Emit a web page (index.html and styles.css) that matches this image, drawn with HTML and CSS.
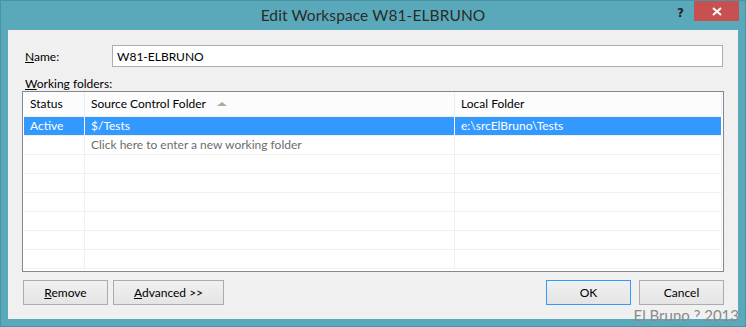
FILE: index.html
```html
<!DOCTYPE html>
<html lang="en">
<head>
    <meta charset="UTF-8">
    <title>Edit Workspace W81-ELBRUNO</title>
    <link rel="stylesheet" href="styles.css">
</head>
<body>

    <!-- Dialog window -->
    <div class="window">
        <div class="title-bar">
            <div></div>
            <div class="title">Edit Workspace W81-ELBRUNO</div>
            <div class="controls">
                <span class="help">?</span>
                <span class="close">
                    <svg width="10" height="9" viewBox="0 0 10 9"><path d="M1 1 L9 8 M9 1 L1 8" stroke="#fff" stroke-width="2"/></svg>
                </span>
            </div>
        </div>

        <div class="client">
            <div class="name-row">
                <label class="label"><u>N</u>ame:</label>
                <div class="textbox">W81-ELBRUNO</div>
            </div>
            <div class="label folders-label"><u>W</u>orking folders:</div>

            <!-- Working folders grid -->
            <div class="grid">
                <div class="grid-row header">
                    <div class="cell">Status</div>
                    <div class="cell">Source Control Folder <span class="sort-arrow"></span></div>
                    <div class="cell">Local Folder</div>
                </div>
                <div class="grid-row selected">
                    <div class="cell">Active</div>
                    <div class="cell">$/Tests</div>
                    <div class="cell">e:\srcElBruno\Tests</div>
                </div>
                <div class="grid-row">
                    <div class="cell"></div>
                    <div class="cell hint">Click here to enter a new working folder</div>
                    <div class="cell"></div>
                </div>
                <div class="grid-row"><div class="cell"></div><div class="cell"></div><div class="cell"></div></div>
                <div class="grid-row"><div class="cell"></div><div class="cell"></div><div class="cell"></div></div>
                <div class="grid-row"><div class="cell"></div><div class="cell"></div><div class="cell"></div></div>
                <div class="grid-row"><div class="cell"></div><div class="cell"></div><div class="cell"></div></div>
                <div class="grid-row"><div class="cell"></div><div class="cell"></div><div class="cell"></div></div>
                <div class="grid-row"><div class="cell"></div><div class="cell"></div><div class="cell"></div></div>
            </div>

            <div class="button-row">
                <button class="btn"><u>R</u>emove</button>
                <button class="btn btn-advanced"><u>A</u>dvanced &gt;&gt;</button>
                <div class="spacer"></div>
                <button class="btn btn-ok">OK</button>
                <button class="btn">Cancel</button>
            </div>
        </div>

        <div class="watermark">El Bruno ? 2013</div>
    </div>

</body>
</html>
```

FILE: styles.css
```css
body {
    margin: 0;
    padding: 0;
    font-family: 'Lato', 'Noto Sans', sans-serif;
    font-size: 12px;
    color: #000;
}

/* Window frame */
.window {
    position: relative;
    width: 746px;
    height: 327px;
    box-sizing: border-box;
    background-color: #5aa9bb;
    border: 1px solid #4a93a4;
    display: flex;
    flex-direction: column;
}

.title-bar {
    height: 29px;
    display: grid;
    grid-template-columns: 1fr auto 1fr;
    align-items: start;
}

    .title-bar .title {
        font-size: 15.5px;
        color: #2b2b2b;
        padding-top: 5px;
        letter-spacing: 0.1px;
    }

    .title-bar .controls {
        display: flex;
        justify-content: flex-end;
        align-items: flex-start;
        padding-right: 6px;
    }

    .title-bar .help {
        font-family: 'DejaVu Sans', sans-serif;
        font-weight: bold;
        font-size: 12px;
        color: #222;
        margin-top: 5px;
        margin-right: 10px;
    }

    .title-bar .close {
        width: 45px;
        height: 20px;
        background-color: #c75050;
        display: flex;
        align-items: center;
        justify-content: center;
    }

/* Client area */
.client {
    margin: 0 7px;
    height: 289px;
    background-color: #f0f0f0;
    box-sizing: border-box;
    padding: 15px 14px 0 14px;
    display: flex;
    flex-direction: column;
}

.label {
    color: #000;
}

.name-row {
    display: flex;
    align-items: center;
}

    .name-row .label {
        width: 87px;
        padding-left: 3px;
    }

.textbox {
    flex: 1;
    height: 22px;
    box-sizing: border-box;
    border: 1px solid #abadb3;
    background-color: #fff;
    padding: 3px 4px 0 4px;
    margin-right: 1px;
}

.folders-label {
    padding-left: 3px;
    margin-top: 9px;
    height: 15px;
}

/* Grid */
.grid {
    height: 181px;
    box-sizing: border-box;
    border: 1px solid #828790;
    background-color: #fff;
    overflow: hidden;
    padding: 0 1px;
}

.grid-row {
    display: grid;
    grid-template-columns: 61px 370px 1fr;
    height: 19px;
    box-sizing: border-box;
    border-bottom: 1px solid #f0f0f0;
}

    .grid-row .cell {
        border-right: 1px solid #f0f0f0;
        padding-left: 6px;
        line-height: 18px;
        white-space: nowrap;
        overflow: hidden;
    }

    .grid-row.header {
        height: 25px;
        background-color: #fcfcfd;
    }

        .grid-row.header .cell {
            line-height: 24px;
            border-right-color: #e8eef4;
        }

    .grid-row.selected {
        background-color: #3399ff;
        color: #fff;
    }

        .grid-row.selected .cell {
            border-right-color: #ffffff;
        }

.hint {
    color: #6d6d6d;
}

.sort-arrow {
    display: inline-block;
    width: 0;
    height: 0;
    margin-left: 8px;
    vertical-align: 2px;
    border-left: 5px solid transparent;
    border-right: 5px solid transparent;
    border-bottom: 4px solid #aeab99;
}

/* Buttons */
.button-row {
    display: flex;
    gap: 5px;
    margin-top: 8px;
    padding-left: 1px;
}

    .button-row .spacer {
        flex: 1;
    }

.btn {
    width: 85px;
    height: 25px;
    font-family: inherit;
    font-size: 12px;
    color: #000;
    border: 1px solid #acacac;
    background: linear-gradient(#f0f0f0, #e5e5e5);
    padding: 0;
}

.btn-advanced {
    width: 111px;
}

.btn-ok {
    border-color: #3399ff;
    margin-right: 3px;
}

.watermark {
    position: absolute;
    right: 6px;
    bottom: 2px;
    font-size: 15px;
    color: #8a8a8a;
}
```
